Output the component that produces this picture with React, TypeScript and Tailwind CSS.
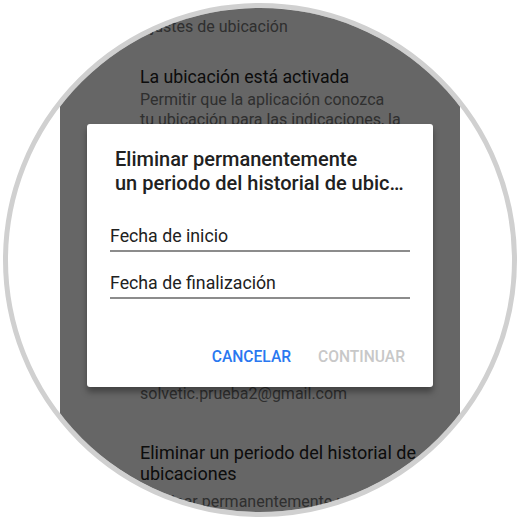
import React from 'react';

const font = { fontFamily: 'Roboto, "Noto Sans", sans-serif' };

const DateField: React.FC<{ label: string }> = ({ label }) => (
  <div className="border-b-2 border-[#8c8c8c] pb-[3px] text-[17.75px] leading-[22px] text-[#212121]">
    {label}
  </div>
);

export default function App() {
  return (
    <div className="flex h-[520px] w-[520px] items-center justify-center bg-white" style={font}>
      <div className="flex h-[514px] w-[514px] justify-center overflow-hidden rounded-full border-[5px] border-[#d0d0d0] bg-white">
        <div className="relative h-full w-[400px] bg-white pl-[80px] pt-[9px]">
          <div className="text-[16px] leading-[20px] text-[#757575]">Ajustes de ubicación</div>

          <div className="mt-[28px] text-[17.7px] leading-[24px] text-[#212121]">La ubicación está activada</div>
          <div className="mt-px text-[16px] leading-[20px] text-[#757575]">
            <div>Permitir que la aplicación conozca</div>
            <div>tu ubicación para las indicaciones, la</div>
            <div>búsqueda de lugares y otros servicios.</div>
          </div>

          <div className="mt-[210px] text-[18px] leading-[24px] text-[#212121]">Cuenta</div>
          <div className="text-[16px] leading-[20px] text-[#757575]">solvetic.prueba2@gmail.com</div>

          <div className="mt-[38px] text-[18px] leading-[21px] text-[#212121]">
            <div>Eliminar un periodo del historial de</div>
            <div>ubicaciones</div>
          </div>
          <div className="mt-[8px] text-[16px] leading-[20px] text-[#757575]">
            <div>Eliminar permanentemente un periodo</div>
            <div>del historial de cada ubicación</div>
          </div>

          {/* dim layer + dialog */}
          <div className="absolute inset-0 flex justify-center bg-black/60">
            <div className="mt-[116px] h-[263px] w-[346px] rounded-[3px] bg-white shadow-[0_5px_6px_rgba(0,0,0,0.35)]">
              <div className="px-[28px] pt-[23px] text-[20px] font-medium leading-[24px] text-[#212121]">
                <div>Eliminar permanentemente</div>
                <div>un periodo del historial de ubic…</div>
              </div>
              <div className="mt-[30px] flex flex-col gap-[20px] px-[23px]">
                <DateField label="Fecha de inicio" />
                <DateField label="Fecha de finalización" />
              </div>
              <div className="mt-[48px] flex justify-end gap-[27px] pr-[28px] text-[15.6px] font-medium leading-[20px]">
                <span className="text-[#2a78f0]">CANCELAR</span>
                <span className="text-[#c8c8c8]">CONTINUAR</span>
              </div>
            </div>
          </div>
        </div>
      </div>
    </div>
  );
}
